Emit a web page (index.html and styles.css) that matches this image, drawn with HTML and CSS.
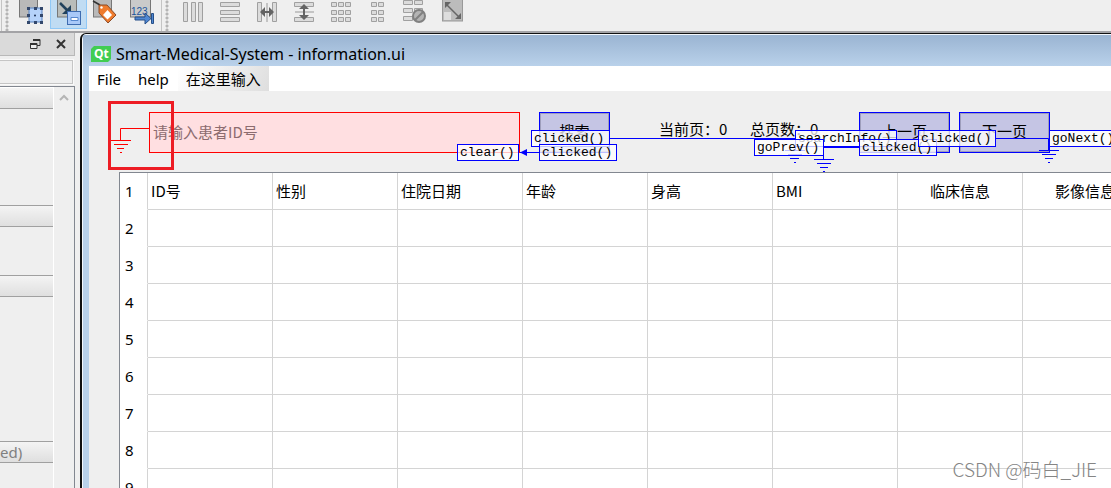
FILE: index.html
```
<!DOCTYPE html>
<html lang="zh-CN">
<head>
<meta charset="utf-8">
<title>Smart-Medical-System - information.ui</title>
<link rel="stylesheet" href="styles.css">
</head>
<body>
<div class="app">
  <header class="toolbar">
    <span class="grip grip-first"></span>
    <div class="tools">
      <button class="tool" aria-label="Edit widgets"><svg viewBox="13 0 37 29"><rect x="19.500" y="-3" width="18" height="20" fill="#b9b9b9" stroke="#777"/><path d="M29 8H42V22H29Z" fill="#b5d2fa" stroke="#5680bd"/><path d="M27 7h3v3h-3zM34 7h3v3h-3zM40 7h3v3h-3zM27 14h3v3h-3zM40 14h3v3h-3zM27 21h3v3h-3zM34 21h3v3h-3zM40 21h3v3h-3z" fill="#33486c"/><circle cx="35" cy="15.500" r="1" fill="#1c2f52"/></svg></button>
      <button class="tool active" aria-label="Edit signals and slots"><svg viewBox="50 0 37 29"><rect x="57.500" y="-3" width="19" height="20" fill="#b9bdba" stroke="#777"/><path d="M60 3L68 11" stroke="#20415b" stroke-width="2.500"/><path d="M71 5V14H62Z" fill="#20415b"/><rect x="67.500" y="11.500" width="13" height="13" fill="#a9c9f8" stroke="#3e6cb0"/><path d="M71 17.500H78V20.500H71Z" fill="#fff" stroke="#5788ce"/></svg></button>
      <button class="tool" aria-label="Edit buddies"><svg viewBox="87 0 37 29"><rect x="93.500" y="-3" width="18" height="20" fill="#b9b9b9" stroke="#777"/><path d="M93 1L100 5" stroke="#333" stroke-width="1.500"/><path d="M99 5L107 5L116 15L108 23L99 13Z" fill="#ef7b2d" stroke="#8b4c28"/><path d="M107.500 10L112 15L107.500 19.500L103 15Z" fill="#fff"/><circle cx="101.500" cy="7.500" r="1.200" fill="#fff"/></svg></button>
      <button class="tool" aria-label="Edit tab order"><svg viewBox="124 0 37 29"><rect x="130.500" y="-3" width="20" height="20" fill="#cacaca" stroke="#777"/><text class="tab-digits" x="131" y="15">123</text><path d="M135 17H145V13L151 18.500L145 24V20H135Z" fill="#4f87d2" stroke="#264f88"/><path d="M151.500 13.500h2v10h-2z" fill="#4f87d2" stroke="#264f88"/></svg></button>
    </div>
    <span class="grip"></span>
    <div class="tools">
      <button class="tool" aria-label="Lay out horizontally"><svg viewBox="174 0 37 29"><path class="metal" d="M183.500 2.500h4v19h-4zM191.500 2.500h4v19h-4zM198.500 2.500h4v19h-4z"/></svg></button>
      <button class="tool" aria-label="Lay out vertically"><svg viewBox="211 0 37 29"><path class="metal" d="M220.500 2.500h19v4h-19zM220.500 10.500h19v4h-19zM220.500 17.500h19v4h-19z"/></svg></button>
      <button class="tool" aria-label="Horizontal splitter"><svg viewBox="248 0 37 29"><path class="metal" d="M257.500 2.500h4v19h-4zM272.500 2.500h4v19h-4z"/><path d="M267 3V22" stroke="#999"/><path d="M260 12l5-5v4h4V7l5 5l-5 5v-4h-4v4z" fill="#646464"/></svg></button>
      <button class="tool" aria-label="Vertical splitter"><svg viewBox="285 0 37 29"><path class="metal" d="M294.500 2.500h19v4h-19zM294.500 17.500h19v4h-19z"/><path d="M295 12H314" stroke="#999"/><path d="M304 4l5 5h-4v6h4l-5 5l-5-5h4V9h-4z" fill="#646464"/></svg></button>
      <button class="tool" aria-label="Lay out in a grid"><svg viewBox="322 0 37 29"><path class="metal" d="M331.500 2.500h5v4h-5zM338.500 2.500h5v4h-5zM345.500 2.500h5v4h-5zM331.500 10.500h5v4h-5zM338.500 10.500h5v4h-5zM345.500 10.500h5v4h-5zM331.500 17.500h5v4h-5zM338.500 17.500h5v4h-5zM345.500 17.500h5v4h-5z"/></svg></button>
      <button class="tool" aria-label="Lay out in a form"><svg viewBox="359 0 37 29"><path class="metal" d="M371.500 2.500h5v4h-5zM378.500 2.500h5v4h-5zM371.500 10.500h5v4h-5zM378.500 10.500h5v4h-5zM371.500 17.500h5v4h-5zM378.500 17.500h5v4h-5z"/></svg></button>
      <button class="tool" aria-label="Break layout"><svg viewBox="396 0 37 29"><path class="metal" d="M403.500 .5h9v4h-9zM414.500 .5h8v4h-8zM403.500 8.500h9v4h-9zM414.500 8.500h8v4h-8zM403.500 16.500h9v4h-9z"/><circle cx="419" cy="16" r="6" fill="#b4b4b4" stroke="#808080" stroke-width="2"/><path d="M415 20L423 12" stroke="#808080" stroke-width="2"/></svg></button>
      <button class="tool" aria-label="Adjust size"><svg viewBox="433 0 37 29"><rect x="442.500" y="-3" width="20" height="24" fill="#bcbcbc" stroke="#999"/><path d="M444 12h7v8h-7z" fill="#ddd"/><path d="M447 5L459 17" stroke="#666" stroke-width="1.500"/><path d="M445 2h6l-6 6zM461 19h-6l6-6z" fill="#666"/></svg></button>
    </div>
  </header>

  <div class="workspace">
    <aside class="dock">
      <div class="dock-title">
        <button class="dock-btn" aria-label="Float"><svg viewBox="0 0 12 12"><path d="M4 1.500H11V7.500H8" fill="none" stroke="#333"/><path d="M4 2H11" stroke="#333" stroke-width="2"/><path d="M1.500 5.500H8V10.500H1.500Z" fill="#eee" stroke="#333"/><path d="M1 6H8" stroke="#333" stroke-width="2"/></svg></button>
        <button class="dock-btn" aria-label="Close"><svg viewBox="0 0 12 12"><path d="M2 2L10 10M10 2L2 10" stroke="#333" stroke-width="2"/></svg></button>
      </div>
      <input class="dock-filter" type="text" aria-label="Filter">
      <div class="dock-list">
        <div class="groups">
          <div class="group-head first"></div><div class="group-body large"></div>
          <div class="group-head"></div><div class="group-body small"></div>
          <div class="group-head"></div><div class="group-body huge"></div>
          <div class="group-head">ed)</div>
        </div>
        <div class="scroll"><svg viewBox="0 0 10 8"><path d="M1 6L5 2L9 6" fill="none" stroke="#b5b5b5" stroke-width="2"/></svg></div>
      </div>
    </aside>

    <main class="window">
      <div class="titlebar">
        <svg class="qt" viewBox="0 0 20 16"><path d="M3 0H20V13L17 16H0V3Z" fill="#41cd52"/><text x="3" y="12">Qt</text></svg>
        <span>Smart-Medical-System - information.ui</span>
      </div>
      <div class="client">
        <nav class="menubar">
          <button class="menu">File</button><button class="menu">help</button><button class="menu new">在这里输入</button>
        </nav>
        <section class="form">
          <div class="controls">
            <input class="patient" type="text" placeholder="请输入患者ID号" aria-label="患者ID号">
            <button class="btn search">搜索</button>
            <span class="page">当前页：0</span>
            <span class="total">总页数：0</span>
            <button class="btn prev">上一页</button>
            <button class="btn next">下一页</button>
          </div>
          <div class="table-frame">
            <table>
              <colgroup><col class="num"><col><col><col><col><col><col><col><col></colgroup>
              <tbody>
              <tr><th scope="row">1</th><td>ID号</td><td>性别</td><td>住院日期</td><td>年龄</td><td>身高</td><td>BMI</td><td class="mid">临床信息</td><td class="mid">影像信息</td></tr>
              <tr><th scope="row">2</th><td></td><td></td><td></td><td></td><td></td><td></td><td></td><td></td></tr>
              <tr><th scope="row">3</th><td></td><td></td><td></td><td></td><td></td><td></td><td></td><td></td></tr>
              <tr><th scope="row">4</th><td></td><td></td><td></td><td></td><td></td><td></td><td></td><td></td></tr>
              <tr><th scope="row">5</th><td></td><td></td><td></td><td></td><td></td><td></td><td></td><td></td></tr>
              <tr><th scope="row">6</th><td></td><td></td><td></td><td></td><td></td><td></td><td></td><td></td></tr>
              <tr><th scope="row">7</th><td></td><td></td><td></td><td></td><td></td><td></td><td></td><td></td></tr>
              <tr><th scope="row">8</th><td></td><td></td><td></td><td></td><td></td><td></td><td></td><td></td></tr>
              <tr><th scope="row">9</th><td></td><td></td><td></td><td></td><td></td><td></td><td></td><td></td></tr>
              </tbody>
            </table>
          </div>

          <!-- signal / slot connections drawn over the form -->
          <div class="connections">
            <svg class="wires" viewBox="89 91 1022 82" width="1022" height="82">
              <g fill="none" stroke="#f00"><path d="M149 128.500H120.500V140.500M111 140.500H131M114 144.500H128M117 148.500H124M120 152.500H122"/></g>
              <g fill="none" stroke="#00f"><path d="M610 138.500H795.500V150.500M785 150.500H805M788 154.500H802M790 158.500H799M794 162.500H796"/><path d="M539 152.500H520"/><path d="M859 147.500H823.500V159.500M859 146.500H824M814 159.500H834M817 163.500H831M820 167.500H828M823 171.500H825"/><path d="M996 138.500H1048.500V150.500M1039 150.500H1059M1042 154.500H1056M1045 158.500H1053M1048 162.500H1050"/></g>
              <path d="M520 152.500L527 149V156Z" fill="#00f"/>
            </svg>
            <span class="tag s1">clicked()</span>
            <span class="tag s2">clear()</span>
            <span class="tag s3">clicked()</span>
            <span class="tag s4">searchInfo()</span>
            <span class="tag s5">goPrev()</span>
            <span class="tag s6">clicked()</span>
            <span class="tag s7">clicked()</span>
            <span class="tag s8">goNext()</span>
            <span class="marker"></span>
          </div>
        </section>
      </div>
    </main>
  </div>
  <div class="watermark">CSDN @码白_JIE</div>
</div>
</body>
</html>
```
FILE: styles.css
```
* { box-sizing: border-box; }
body {
  margin: 0;
  background: #efefef;
  color: #000;
  font: 15px/20px "Noto Sans", "Noto Sans CJK SC", sans-serif;
}
button, input { font: inherit; color: inherit; padding: 0; margin: 0; border: 0; border-radius: 0; background: none; }

.app { position: relative; height: 100vh; overflow: hidden; display: flex; flex-direction: column; }

.toolbar { flex: none; display: flex; height: 33px; padding-left: 1px; border-bottom: 2px solid #a3a3a6; }
.tools { display: flex; }
.grip { width: 12px; border-left: 1px solid #c4c4c4; background: radial-gradient(circle, #b4b4b4 1px, transparent 2px) 3px 0 / 4px 4px repeat-y; }
.grip:not(.grip-first) { width: 13px; }
.tool { width: 37px; height: 29px; }
.tool svg { display: block; width: 37px; height: 29px; }
.tool.active { background: #c0dcf3; border: 1px solid #90c8f6; border-top: 0; }
.tool.active svg { margin-left: -1px; }
.tab-digits { font: 10px "Liberation Sans", sans-serif; fill: #1c549b; }
.metal { fill: #dcdcdc; stroke: #a0a0a0; }

.workspace { flex: 1; min-height: 0; display: flex; }
.dock { flex: none; width: 80px; padding-right: 5px; display: flex; flex-direction: column; }
.dock-title { height: 23px; flex: none; display: flex; justify-content: flex-end; align-items: center; gap: 14px; padding-right: 7px; background: #dadada; border: 1px solid #b9b9b9; border-left: 0; border-top: 0; }
.dock-btn { width: 12px; height: 12px; }
.dock-btn svg { display: block; }
.dock-filter { flex: none; height: 24px; width: 73px; margin: 4px 0 2px; border: 1px solid #c5c5c5; border-left: 0; outline: 1px solid #fafafa; }
.dock-list { flex: 1; min-height: 0; display: flex; border: 1px solid #828790; border-left: 0; border-bottom: 0; }
.groups { width: 54px; flex: none; border-right: 1px solid #fff; }
.group-head { height: 22px; border: solid #a0a0a0; border-width: 1px 0; background: linear-gradient(#f4f4f4, #dfdfdf); color: #808080; }
.group-head.first { border-top-color: #fff; }
.group-body.large { height: 96px; }
.group-body.small { height: 48px; }
.group-body.huge { height: 144px; }
.scroll { flex: 1; padding: 7px 5px; }
.scroll svg { display: block; width: 10px; height: 8px; }

.window { flex: 1; min-width: 0; display: flex; flex-direction: column; border: 2px solid #111; border-width: 1px 0 0 2px; border-top-left-radius: 6px; background: #b9d1ea; padding-left: 7px; box-shadow: inset 1px 1px #f4f8fd; overflow: hidden; }
.titlebar { flex: none; height: 31px; display: flex; align-items: center; gap: 5px; padding: 7px 2px 0 8px; margin: 1px 0 0 -6px; background: linear-gradient(#9ab4d2, #b9d1ea); font-size: 16px; }
.qt { width: 20px; height: 16px; }
.qt text { font: bold 12px "Open Sans", sans-serif; fill: #fff; }
.client { flex: 1; min-height: 0; display: flex; flex-direction: column; background: #efefef; }
.menubar { flex: none; height: 25px; display: flex; gap: 1px; background: #fff; }
.menu { padding: 0 8px; }
.menu.new { background: linear-gradient(120deg, #fff, #dedede); font-family: "Noto Sans CJK SC", sans-serif; }

.form { flex: 1; min-height: 0; position: relative; display: flex; flex-direction: column; overflow: hidden; padding: 21px 0 0 30px; }
.controls { flex: none; display: flex; height: 60px; padding-left: 30px; font-family: "Noto Sans CJK SC", sans-serif; align-items: flex-start; }
.controls > * { flex: none; }
.patient { width: 371px; height: 41px; padding: 0 0 2px 3px; background: #ffdfe1; border: 1px solid #f00; }
.patient::placeholder { color: #8c6c6f; opacity: 1; }
.btn { height: 41px; padding-bottom: 4px; background: #c5c5e4; border: 1px solid #00f; box-shadow: inset 0 0 0 1px #9e9ebc; }
.search { width: 71px; margin-left: 19px; }
.page { margin: 7px 23px 0 49px; width: 68px; white-space: nowrap; }
.total { margin-top: 7px; width: 109px; white-space: nowrap; }
.prev { width: 91px; }
.next { width: 91px; margin-left: 9px; }

.table-frame { flex: 1; min-height: 0; overflow: hidden; border: 1px solid #828790; border-width: 1px 0 0 1px; background: #fff; }
table { width: 1028px; table-layout: fixed; border-collapse: separate; border-spacing: 0; }
col { width: 125px; }
col.num { width: 28px; }
th, td { height: 37px; padding: 0 3px; text-align: left; border: solid #d4d4d4; border-width: 0 1px 1px 0; }
td { font-family: "Noto Sans CJK SC", sans-serif; }
th { padding: 0 5px; font-weight: 400; border-bottom-color: #fff; }
td.mid { text-align: center; }

.connections { position: absolute; left: 0; top: 0; pointer-events: none; }
.wires { display: block; }
.tag { position: absolute; height: 17px; padding: 0 2px; border: 1px solid #00f; background: rgba(255, 255, 255, .75); font: 13px/16px "Liberation Mono", monospace; }
.s1 { left: 442px; top: 39px; width: 79px; }
.s2 { left: 368px; top: 53px; width: 62px; }
.s3 { left: 450px; top: 53px; width: 78px; }
.s4 { left: 706px; top: 39px; width: 102px; }
.s5 { left: 665px; top: 48px; width: 70px; }
.s6 { left: 770px; top: 48px; width: 78px; }
.s7 { left: 829px; top: 39px; width: 78px; }
.s8 { left: 960px; top: 39px; width: 70px; }
.marker { position: absolute; left: 19px; top: 10px; width: 66px; height: 69px; border: 3px solid #ed1c24; }

.watermark { position: absolute; right: 14px; bottom: 8px; color: #858585; font: 300 19px/22px "Noto Sans CJK SC", sans-serif; }
```
